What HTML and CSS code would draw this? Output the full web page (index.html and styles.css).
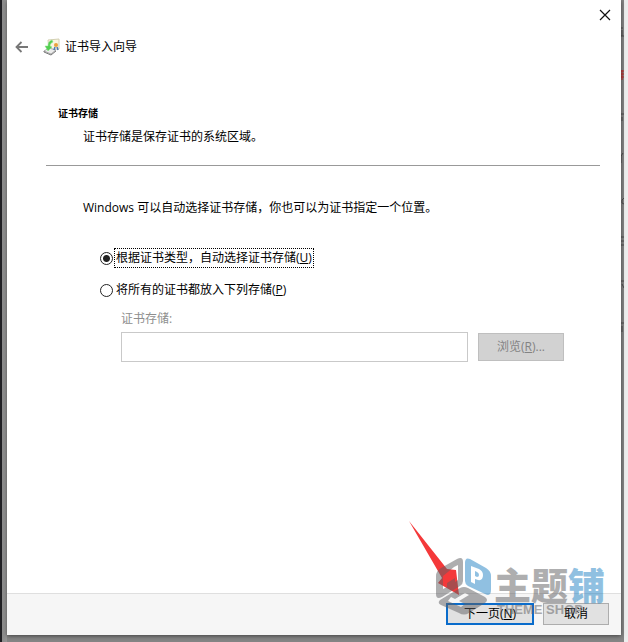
FILE: index.html
```html
<!DOCTYPE html>
<html lang="zh-CN">
<head>
    <meta charset="UTF-8">
    <title>证书导入向导</title>
    <link rel="stylesheet" href="styles.css">
</head>
<body>
    <form class="dialog">
        <div class="titlebar">
            <button type="button" class="icon-button" aria-label="关闭">
                <svg width="12" height="12" viewBox="0 0 12 12"><path d="M1 1L11 11M11 1L1 11" stroke="#111" stroke-width="1.2"/></svg>
            </button>
        </div>
        <header class="header">
            <button type="button" class="icon-button" aria-label="返回">
                <svg width="14" height="12" viewBox="0 0 14 12" fill="none" stroke="#777" stroke-width="1.8"><path d="M13 6H2M6.500 1L1.500 6L6.500 11"/></svg>
            </button>
            <svg class="cert-icon" width="18" height="18" viewBox="0 0 18 18">
                <path d="M5 2L16 1V11L6 12Z" fill="#f8f5df" stroke="#d3d0b2"/>
                <path d="M1 13L6 10L13 12L8 16Z" fill="#ececec" stroke="#aaa"/>
                <path d="M1 13V14L8 17L13 13" fill="none" stroke="#777"/>
                <path d="M9 2C6 3 5 5 5 8L2 8L5 13L9 9L7 8C7 6 8 5 10 4Z" fill="#52cf50" stroke="#8de08b" stroke-width=".5"/>
                <path d="M12 9L11 12M14 9L15 12" stroke="#4b78b5" stroke-width="1.5"/>
                <circle cx="13" cy="7" r="2" fill="#e9a13a"/>
            </svg>
            <h1 class="title">证书导入向导</h1>
        </header>

        <main class="content">
            <section class="intro">
                <h2 class="step-title">证书存储</h2>
                <p class="step-text">证书存储是保存证书的系统区域。</p>
            </section>
            <section class="options">
                <p class="lead">Windows 可以自动选择证书存储，你也可以为证书指定一个位置。</p>
                <div class="option">
                    <input type="radio" name="store" id="auto" checked>
                    <label for="auto" class="focused">根据证书类型，自动选择证书存储(<u>U</u>)</label>
                </div>
                <div class="option">
                    <input type="radio" name="store" id="manual">
                    <label for="manual">将所有的证书都放入下列存储(<u>P</u>)</label>
                </div>
                <div class="store">
                    <label for="path">证书存储:</label>
                    <div class="store-row">
                        <input type="text" id="path" disabled>
                        <button type="button" class="button" disabled>浏览(<u>R</u>)...</button>
                    </div>
                </div>
            </section>
        </main>

        <footer class="footer">
            <button type="submit" class="button primary">下一页(<u>N</u>)</button>
            <button type="button" class="button">取消</button>
        </footer>

        <!-- pointer and site watermark, drawn over the buttons -->
        <svg class="overlay" width="200" height="100" viewBox="0 0 200 100" aria-hidden="true">
            <path d="M-19 0L19 48L28 49L31 74L10 62L14 57Z" fill="#f4393a"/>
            <g opacity=".5">
                <path fill="#5f5f62" fill-rule="evenodd" d="M13 47L29 38Q35 35 35 41V60Q35 63 32 65L14 76Q8 79 8 73V55Q8 50 13 47ZM15 55V68L19 66V62L27 57V61L30 59V44L26 46Z"/>
                <path fill="#5f5f62" fill-rule="evenodd" d="M12 79L32 67Q36 65 40 67L57 76Q61 79 57 82L41 92Q36 95 31 92L13 84Q9 82 12 79ZM20 80L33 86L37 83L31 80L41 74L37 72L27 78L23 76Z"/>
                <path fill="#2383c4" fill-rule="evenodd" d="M37 42Q37 36 42 38L58 47Q63 50 63 55V69Q63 76 57 73L40 65Q37 63 37 60ZM43 45V61L47 63V58L50 59Q55 60 55 54Q55 50 51 48ZM47 50L49 51Q51 52 51 54Q51 56 49 56L47 55Z"/>
                <text x="66" y="79" class="mark-name" fill="#5f5f62">主题<tspan fill="#2383c4">铺</tspan></text>
                <text x="69" y="93" class="mark-sub" fill="#5f5f62">THEME SHOP</text>
            </g>
        </svg>
    </form>
    <svg class="backdrop-text" width="3" height="340" viewBox="0 0 3 340" aria-hidden="true">
        <path d="M0 28H2M1 30V36M0 36H3M0 114H3M1 117V121M2 153L0 156V163M3 198L1 200V203L3 204M0 237H3M0 241H3M0 245H3M0 281H3M1 284L3 288M0 323H3M1 326V332" fill="none" stroke="#4c4c4c"/>
        <path d="M0 71H3M0 74H3M0 77H3M1 70V80" fill="none" stroke="#c32828"/>
    </svg>
</body>
</html>
```
FILE: styles.css
```css
* { box-sizing: border-box; }
body {
    display: flex;
    min-height: 100vh;
    margin: 0;
    padding: 0 4px 7px 7px;
    background: linear-gradient(90deg, #202024 2px, #8b8b8b 2px, #969696 7px, transparent 7px),
        linear-gradient(270deg, #ededed 4px, #858585 4px);
    color: #000;
    font: 12px/18px "Open Sans", "Noto Sans CJK SC", sans-serif;
}
h1, h2, p { margin: 0; }
input, button { font: inherit; color: inherit; }
.dialog {
    position: relative;
    display: flex;
    flex: 1;
    flex-direction: column;
    background: #fff;
    box-shadow: 0 1px 4px rgba(0, 0, 0, .5);
}
.titlebar { display: flex; justify-content: flex-end; height: 30px; padding-right: 10px; }
.icon-button {
    display: flex;
    align-items: center;
    padding: 0;
    border: 0;
    background: none;
}
.header { display: flex; align-items: center; height: 34px; padding-left: 8px; }
.cert-icon { margin-left: 14px; }
.title { margin-left: 4px; font-size: 12px; font-weight: normal; }

.content { flex: 1; padding: 40px 21px 0 39px; }
.intro { padding: 0 0 19px 12px; border-bottom: 1px solid #999; }
.step-title { font-size: 10px; line-height: 18px; }
.step-text { padding: 6px 0 0 25px; }
.options { padding: 33px 36px 0 37px; }
.lead { margin-bottom: 25px; }
.option { display: flex; align-items: center; height: 32px; padding-left: 17px; }
.option label { padding: 0 1px; }
.option .focused { outline: 1px dotted #000; }
.option input {
    appearance: none;
    width: 13px;
    height: 13px;
    margin: 0 2px 0 0;
    border: 1px solid #222;
    border-radius: 50%;
    background: #fff;
}
.option input:checked { background: radial-gradient(circle, #222 3px, transparent 4px); }
.store { padding: 4px 0 0 38px; color: #8e8e8e; }
.store-row { display: flex; align-items: center; gap: 10px; margin-top: 4px; }
.store-row input {
    flex: 1;
    min-width: 0;
    height: 30px;
    border: 1px solid #c9c9c9;
    background: #fff;
}
.button {
    width: 66px;
    height: 22px;
    padding: 0;
    border: 1px solid #adadad;
    background: #e1e1e1;
}
.button:disabled {
    width: 86px;
    height: 28px;
    border-color: #bfbfbf;
    background: #d2d2d2;
    color: #838383;
}
.primary { width: 88px; border: 2px solid #0a6ccb; }

.footer {
    display: flex;
    justify-content: flex-end;
    gap: 9px;
    height: 42px;
    padding: 9px 12px 0 0;
    border-top: 1px solid #dfdfdf;
    background: #f6f6f6;
}
.overlay {
    position: absolute;
    right: -7px;
    bottom: 14px;
    overflow: visible;
    pointer-events: none;
}
.mark-name { font: 900 37px "Noto Sans CJK SC", sans-serif; }
.mark-sub { font: bold 13px "Liberation Sans", sans-serif; }
.backdrop-text { flex: none; }
```
